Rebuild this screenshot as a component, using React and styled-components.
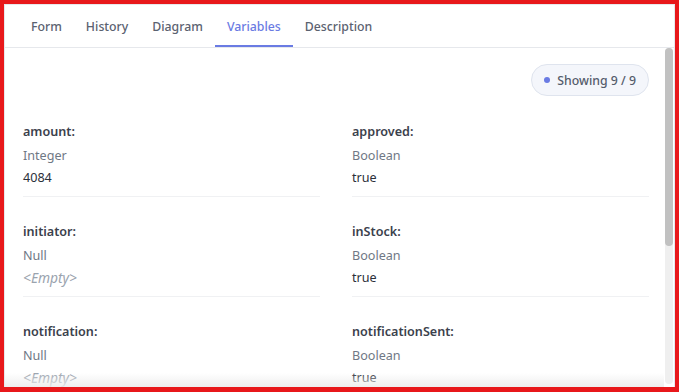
import React, { useState } from 'react';
import styled, { createGlobalStyle } from 'styled-components';

const GlobalStyle = createGlobalStyle`
  html, body { margin: 0; padding: 0; background: #fff; }
  body { font-family: "Noto Sans", "Segoe UI", sans-serif; }
  * { box-sizing: border-box; }
`;

const tabs = ['Form', 'History', 'Diagram', 'Variables', 'Description'];

const variables = [
  { name: 'amount', type: 'Integer', value: '4084' },
  { name: 'approved', type: 'Boolean', value: 'true' },
  { name: 'initiator', type: 'Null', value: null },
  { name: 'inStock', type: 'Boolean', value: 'true' },
  { name: 'notification', type: 'Null', value: null },
  { name: 'notificationSent', type: 'Boolean', value: 'true' },
  { name: 'orderId', type: 'String', value: 'ORD-2291' },
  { name: 'priority', type: 'String', value: 'high' },
  { name: 'reviewer', type: 'Null', value: null },
];

function App() {
  const [active, setActive] = useState('Variables');

  return (
    <Frame>
      <GlobalStyle />
      <Panel>
        <TabBar>
          {tabs.map((t) => (
            <Tab key={t} $active={t === active} onClick={() => setActive(t)}>
              {t}
            </Tab>
          ))}
        </TabBar>

        <Body>
          <Viewport>
            <Content>
              <Toolbar>
                <Badge>
                  <Dot />
                  Showing {variables.length} / {variables.length}
                </Badge>
              </Toolbar>

              <Grid>
                {variables.map((v) => (
                  <Item key={v.name}>
                    <Name>{v.name}:</Name>
                    <Type>{v.type}</Type>
                    {v.value === null ? <Empty>&lt;Empty&gt;</Empty> : <Value>{v.value}</Value>}
                  </Item>
                ))}
              </Grid>
            </Content>
            <Fade />
          </Viewport>

          {/* scrollbar drawn by hand, the headless browser hides native ones */}
          <Track>
            <Thumb />
          </Track>
        </Body>
      </Panel>
    </Frame>
  );
}

const Frame = styled.div`
  width: 679px;
  height: 392px;
  border: 4px solid #e8181b;
  border-bottom-width: 5px;
  background: #fff;
`;

const Panel = styled.div`
  height: 100%;
  border: 1px solid #e6e8ec;
  border-bottom: none;
  display: flex;
  flex-direction: column;
  overflow: hidden;
`;

const TabBar = styled.div`
  display: flex;
  padding-left: 14px;
  height: 43px;
  border-bottom: 1px solid #e6e8ec;
  flex-shrink: 0;
`;

const Tab = styled.div`
  padding: 3px 12px 0;
  display: flex;
  align-items: center;
  font-size: 12.3px;
  font-weight: 500;
  color: ${(p) => (p.$active ? '#6a7be3' : '#5b6270')};
  border-bottom: 2px solid ${(p) => (p.$active ? '#6a7be3' : 'transparent')};
  cursor: pointer;
`;

const Body = styled.div`
  flex: 1;
  min-height: 0;
  display: flex;
`;

const Viewport = styled.div`
  position: relative;
  flex: 1;
  overflow: hidden;
`;

const Content = styled.div`
  padding: 16px 15px 24px 18px;
`;

const Track = styled.div`
  width: 8px;
  margin: 0 1px 3px 1px;
  border-radius: 4px;
  background: #efefef;
  display: flex;
  flex-direction: column;
`;

const Thumb = styled.div`
  height: 198px;
  border-radius: 4px;
  background: #c1c1c1;
`;

const Fade = styled.div`
  position: absolute;
  left: 0;
  right: 0;
  bottom: 0;
  height: 14px;
  background: linear-gradient(to bottom, rgba(240, 240, 240, 0), rgba(236, 236, 236, 0.9));
  pointer-events: none;
`;

const Toolbar = styled.div`
  display: flex;
  justify-content: flex-end;
`;

const Badge = styled.div`
  display: inline-flex;
  align-items: center;
  gap: 7px;
  height: 32px;
  padding: 0 12px 0 12px;
  border-radius: 16px;
  background: #f4f6fb;
  border: 1px solid #dfe4ee;
  font-size: 12.3px;
  font-weight: 500;
  color: #545c6b;
`;

const Dot = styled.span`
  width: 6px;
  height: 6px;
  border-radius: 50%;
  background: #6a7be3;
`;

const Grid = styled.div`
  margin-top: 26px;
  display: grid;
  grid-template-columns: 1fr 1fr;
  column-gap: 32px;
  row-gap: 25px;
`;

const Item = styled.div`
  display: flex;
  flex-direction: column;
  padding-bottom: 8px;
  border-bottom: 1px solid #f0f1f3;
  font-size: 12.6px;
  line-height: 20px;
`;

const Name = styled.div`
  font-weight: 600;
  color: #3b414c;
  margin-bottom: 4px;
`;

const Type = styled.div`
  color: #6f7885;
  margin-bottom: 2px;
`;

const Value = styled.div`
  color: #2b303a;
`;

const Empty = styled.div`
  color: #9aa3ae;
  font-style: italic;
  font-size: 13.8px;
`;

export default App;
